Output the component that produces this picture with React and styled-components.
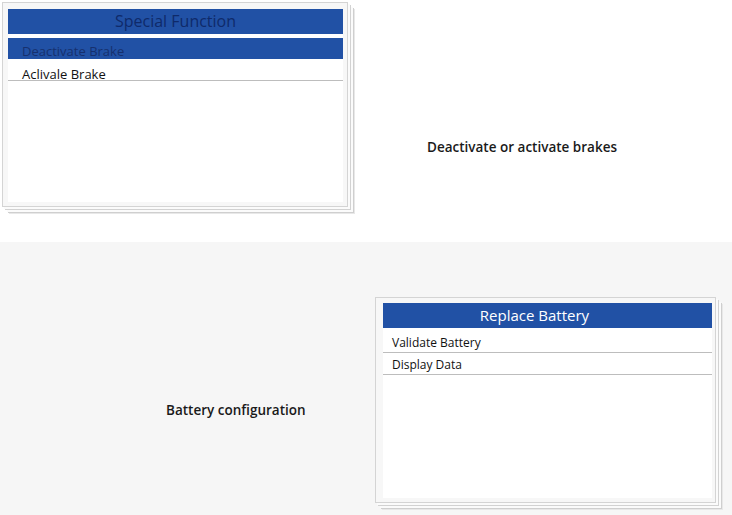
import styled, { createGlobalStyle } from "styled-components";

const GlobalStyle = createGlobalStyle`
  html, body {
    margin: 0;
    padding: 0;
    width: 732px;
    height: 515px;
    overflow: hidden;
    font-family: "Open Sans", "Noto Sans", sans-serif;
  }
`;

const Page = styled.div`
  display: flex;
  flex-direction: column;
  width: 732px;
  height: 515px;
`;

const Section = styled.div`
  display: flex;
  align-items: flex-start;
  height: ${(p) => p.$height}px;
  padding: ${(p) => p.$pad};
  box-sizing: border-box;
  background: ${(p) => p.$bg};
`;

const Card = styled.div`
  width: ${(p) => p.$w}px;
  height: ${(p) => p.$h}px;
  margin: ${(p) => p.$m || 0};
  box-sizing: border-box;
  background: #f7f7f7;
  border: 1px solid #d4d4d4;
  padding: ${(p) => p.$pad};
  box-shadow: 2px 2px 0 #fbfbfb, 3px 3px 0 #d2d2d2, 5px 5px 0 #fbfbfb,
    6px 6px 0 #cfcfcf, 7px 7px 0 #e8e8e8;
  flex: none;
`;

const Panel = styled.div`
  background: #fff;
  height: 100%;
  display: flex;
  flex-direction: column;
`;

const Header = styled.div`
  height: 25px;
  background: #2151a5;
  color: ${(p) => (p.$dim ? "#0f2a6a" : "#ffffff")};
  font-size: ${(p) => p.$size}px;
  line-height: 25px;
  text-align: center;
  padding-right: ${(p) => p.$shift || 0}px;
  margin-bottom: ${(p) => p.$gap}px;
`;

const Row = styled.div`
  height: ${(p) => p.$h}px;
  box-sizing: border-box;
  padding: ${(p) => p.$drop}px 0 0 ${(p) => p.$indent}px;
  line-height: ${(p) => p.$h - p.$drop}px;
  font-size: ${(p) => p.$size}px;
  color: ${(p) => (p.$active ? "#16306e" : "#111")};
  background: ${(p) => (p.$active ? "#2151a5" : "transparent")};
  border-bottom: ${(p) => (p.$active ? "none" : "1px solid #bdbdbd")};
  margin-bottom: ${(p) => (p.$active ? 0 : 1)}px;
  white-space: nowrap;
`;

const Label = styled.div`
  font-size: 13.5px;
  font-weight: 600;
  color: #1a1a1a;
  margin: ${(p) => p.$m};
  white-space: nowrap;
`;

export default function App() {
  return (
    <Page>
      <GlobalStyle />
      <Section $height={242} $bg="#ffffff" $pad="2px 0 0 2px">
        <Card $w={346} $h={205} $pad="6px 4px 4px 5px">
          <Panel>
            <Header $dim $size={16} $gap={4}>Special Function</Header>
            <Row $active $h={21} $drop={5} $size={13} $indent={14}>
              Deactivate Brake
            </Row>
            <Row $h={22} $drop={8} $size={13} $indent={14}>
              Aclivale Brake
            </Row>
          </Panel>
        </Card>
        <Label $m="136px 0 0 79px">Deactivate or activate brakes</Label>
      </Section>
      <Section $height={273} $bg="#f6f6f6" $pad="0 0 0 166px">
        <Label $m="159px 0 0 0">Battery configuration</Label>
        <Card $w={341} $h={206} $m="55px 16px 0 auto" $pad="5px 3px 4px 7px">
          <Panel>
            <Header $size={15} $shift={26} $gap={4}>Replace Battery</Header>
            <Row $h={21} $drop={1} $size={12} $indent={9}>
              Validate Battery
            </Row>
            <Row $h={21} $drop={1} $size={12} $indent={9}>
              Display Data
            </Row>
          </Panel>
        </Card>
      </Section>
    </Page>
  );
}
